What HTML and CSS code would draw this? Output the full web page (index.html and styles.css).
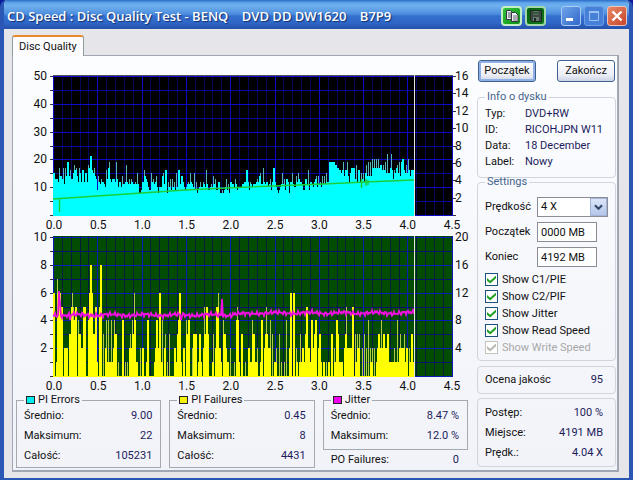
FILE: index.html
```html
<!DOCTYPE html>
<html lang="pl">
<head>
<meta charset="utf-8">
<title>CD Speed : Disc Quality Test</title>
<link rel="stylesheet" href="styles.css">
</head>
<body>
<div class="window">
  <header class="titlebar">
    <h1 class="title">CD Speed : Disc Quality Test - BENQ &nbsp;&nbsp; DVD DD DW1620 &nbsp;&nbsp; B7P9</h1>
    <div class="tools">
      <button class="tool" aria-label="Copy"><svg viewBox="0 0 16 16" width="16" height="16"><path d="M2.500 2.500h4l2 2v7h-6z" fill="#e8ecea" stroke="#334"/><path d="M4 5h3M4 7h3M4 9h3" stroke="#556"/><path d="M7.500 4.500h4l2.500 2.500v6.500h-6.500z" fill="#f2f2f2" stroke="#334"/><path d="M9 8h4M9 10h4M9 12h4" stroke="#667"/></svg></button>
      <button class="tool dark" aria-label="Save"><svg viewBox="0 0 16 16" width="16" height="16"><path d="M2.500 2.500h11v11h-10l-1-1z" fill="#3a4a40" stroke="#1c2a22"/><path d="M5 3h6v4h-6z" fill="#56715c"/><path d="M5 9h6v4h-6z" fill="#6a7a70"/><path d="M7 10v3" stroke="#1c2a22" stroke-width="2"/><path d="M5 5h6" stroke="#1c3a22"/></svg></button>
    </div>
    <div class="controls">
      <button class="ctl" aria-label="Minimize"><svg viewBox="0 0 18 18" width="18" height="18"><path d="M4 11h7v3h-7z" fill="#fff"/></svg></button>
      <button class="ctl dim" aria-label="Maximize"><svg viewBox="0 0 18 18" width="18" height="18"><path d="M4 5h10" stroke="#9cc2f2" stroke-width="2"/><path d="M4.500 5v8.500h9v-8.500" fill="none" stroke="#9cc2f2"/></svg></button>
      <button class="ctl close" aria-label="Close"><svg viewBox="0 0 18 18" width="18" height="18"><path d="M4.500 4.500l9 9M13.500 4.500l-9 9" stroke="#fff" stroke-width="2.400"/></svg></button>
    </div>
  </header>

  <main class="client">
    <div class="tabs" role="tablist"><button class="tab" role="tab" aria-selected="true">Disc Quality</button></div>
    <div class="panel">
      <div class="charts">
        <section class="chart">
          <div class="scale left"><span>50</span><span>40</span><span>30</span><span>20</span><span>10</span><span></span></div>
          <svg class="plot" id="errors" viewBox="0 0 400 141" preserveAspectRatio="none" role="img" aria-label="PI Errors"></svg>
          <div class="scale right"><span>16</span><span>14</span><span>12</span><span>10</span><span>8</span><span>6</span><span>4</span><span>2</span><span></span></div>
          <div class="axis"><span>0.0</span><span>0.5</span><span>1.0</span><span>1.5</span><span>2.0</span><span>2.5</span><span>3.0</span><span>3.5</span><span>4.0</span><span>4.5</span></div>
        </section>
        <section class="chart">
          <div class="scale left"><span>10</span><span>8</span><span>6</span><span>4</span><span>2</span><span></span></div>
          <svg class="plot" id="failures" viewBox="0 0 400 141" preserveAspectRatio="none" role="img" aria-label="PI Failures"></svg>
          <div class="scale right"><span>20</span><span>16</span><span>12</span><span>8</span><span>4</span><span></span></div>
          <div class="axis"><span>0.0</span><span>0.5</span><span>1.0</span><span>1.5</span><span>2.0</span><span>2.5</span><span>3.0</span><span>3.5</span><span>4.0</span><span>4.5</span></div>
        </section>
        <div class="stats">
          <fieldset class="stat">
            <legend><i class="swatch cyan"></i>PI Errors</legend>
            <dl><div><dt>Średnio:</dt><dd>9.00</dd></div><div><dt>Maksimum:</dt><dd>22</dd></div><div><dt>Całość:</dt><dd>105231</dd></div></dl>
          </fieldset>
          <fieldset class="stat">
            <legend><i class="swatch yellow"></i>PI Failures</legend>
            <dl><div><dt>Średnio:</dt><dd>0.45</dd></div><div><dt>Maksimum:</dt><dd>8</dd></div><div><dt>Całość:</dt><dd>4431</dd></div></dl>
          </fieldset>
          <div class="column">
            <fieldset class="stat short">
              <legend><i class="swatch magenta"></i>Jitter</legend>
              <dl><div><dt>Średnio:</dt><dd>8.47 %</dd></div><div><dt>Maksimum:</dt><dd>12.0 %</dd></div></dl>
            </fieldset>
            <dl class="po"><div><dt>PO Failures:</dt><dd>0</dd></div></dl>
          </div>
        </div>
      </div>

      <aside class="side">
        <div class="actions"><button class="btn default">Początek</button><button class="btn">Zakończ</button></div>
        <fieldset class="group info">
          <legend>Info o dysku</legend>
          <dl><dt>Typ:</dt><dd>DVD+RW</dd><dt>ID:</dt><dd>RICOHJPN W11</dd><dt>Data:</dt><dd>18 December</dd><dt>Label:</dt><dd>Nowy</dd></dl>
        </fieldset>
        <fieldset class="group settings">
          <legend>Settings</legend>
          <div class="fields">
            <label for="speed">Prędkość</label>
            <span class="combo"><select id="speed"><option>4 X</option></select><svg class="arrow" viewBox="0 0 17 18" width="17" height="18"><path d="M4.500 7l4 4 4-4" fill="none" stroke="#34496b" stroke-width="2.400"/></svg></span>
            <label for="from">Początek</label><input id="from" type="text" value="0000 MB">
            <label for="to">Koniec</label><input id="to" type="text" value="4192 MB">
          </div>
          <label class="check"><input type="checkbox" checked>Show C1/PIE</label>
          <label class="check"><input type="checkbox" checked>Show C2/PIF</label>
          <label class="check"><input type="checkbox" checked>Show Jitter</label>
          <label class="check"><input type="checkbox" checked>Show Read Speed</label>
          <label class="check off"><input type="checkbox" checked disabled>Show Write Speed</label>
        </fieldset>
        <dl class="group score"><div><dt>Ocena jakośc</dt><dd>95</dd></div></dl>
        <dl class="group progress"><div><dt>Postęp:</dt><dd>100 %</dd></div><div><dt>Miejsce:</dt><dd>4191 MB</dd></div><div><dt>Prędk.:</dt><dd>4.04 X</dd></div></dl>
      </aside>
    </div>
  </main>
</div>
<script src="charts.js"></script>
</body>
</html>
```
FILE: styles.css
```css
* { box-sizing: border-box; }
body {
  margin: 0;
  background: #0a1a9a;
  font: 11px/14px Roboto, "Liberation Sans", sans-serif;
  color: #111;
}
button, input, select { font: inherit; color: inherit; margin: 0; }
fieldset, dl, dd, h1 { margin: 0; padding: 0; }
fieldset { min-width: 0; }

.window {
  min-height: 100vh;
  display: flex;
  flex-direction: column;
  border: solid #2a56b4;
  border-width: 0 4px 4px;
  border-radius: 7px 7px 0 0;
  background: #e6e5ea;
  overflow: hidden;
}

/* Title bar */
.titlebar {
  display: flex;
  align-items: center;
  height: 29px;
  margin: 0 -4px;
  padding: 2px 6px 0 7px;
  background: linear-gradient(#2c6cc8 0, #62a8ec 3px, #6fb0ee 6px, #4c8ede 14px, #346fd0 16px, #2f66c6 23px, #2450ac 29px);
}
.title {
  flex: 1;
  color: #fff;
  font: 600 13px/18px "Open Sans", "Noto Sans", sans-serif;
  text-shadow: 1px 1px 1px #12306e;
  white-space: nowrap;
}
.tools { display: flex; gap: 3px; margin-right: 15px; }
.tool {
  width: 21px; height: 20px; padding: 0;
  display: grid; place-items: center;
  border: 2px solid #c4efc4;
  border-radius: 4px;
  background: linear-gradient(135deg, #35c43a, #0d8c18);
}
.tool.dark { background: linear-gradient(135deg, #07600f, #0a7a18); border-color: #a4d8ac; }
.controls { display: flex; gap: 3px; }
.ctl {
  width: 20px; height: 20px; padding: 0;
  border: 1px solid #a9cbf4;
  border-radius: 3px;
  background: linear-gradient(135deg, #6fa4ea, #3167c8);
}
.ctl svg { display: block; }
.ctl.dim { border-color: #6c9ee6; background: #4680d8; }
.ctl.close { border-color: #f0c4b8; background: linear-gradient(135deg, #e88a6a, #c8442a); }

/* Tabs and page */
.client { flex: 1; display: flex; flex-direction: column; padding: 6px 10px 6px 8px; }
.tabs { display: flex; margin-bottom: -1px; }
.tab {
  position: relative;
  height: 21px;
  padding: 0 6px;
  border: 1px solid #919b9c;
  border-top: 2px solid #e68b2c;
  border-bottom: 0;
  border-radius: 3px 3px 0 0;
  background: #fcfcfe;
}
.panel {
  flex: 1;
  display: flex;
  border: 1px solid #a0a6b4;
  border-right-width: 2px;
  border-bottom-width: 2px;
  background: linear-gradient(#fcfdff, #f2f3f9);
}

/* Charts */
.charts { flex: 1; min-width: 0; padding-top: 19px; }
.chart {
  display: grid;
  grid-template-columns: 40px 1fr 24px;
  margin-bottom: 4px;
  font-size: 12px;
}
.plot { width: 100%; height: 141px; display: block; overflow: visible; }
.scale {
  display: flex; flex-direction: column; justify-content: space-between;
  margin: -6px 0 -6px;
}
.scale span { height: 14px; }
.scale.left { text-align: right; padding-right: 6px; }
.scale.right { padding-left: 2px; }
.axis { grid-column: 2; display: flex; justify-content: space-between; margin: 2px -10px 0; }
.axis span { width: 22px; text-align: center; }

/* Statistics */
.stats {
  display: grid;
  grid-template-columns: repeat(3, minmax(0, 1fr));
  gap: 8px;
  align-items: start;
  padding: 0 9px 0 3px;
  margin-top: -2px;
}
.stat { border: 1px solid #a4a8b2; padding: 1px 8px 1px 7px; }
.stat.short { padding-bottom: 3px; }
.stat legend { display: flex; align-items: center; gap: 3px; line-height: 10px; padding: 0 2px; }
.swatch { width: 9px; height: 8px; border: 1px solid #222; }
.cyan { background: #00eeee; }
.yellow { background: #f4f400; }
.magenta { background: #f000f0; }
dl > div { display: flex; justify-content: space-between; line-height: 20px; }
dd { color: #1c1c5c; }
.po { padding: 0 9px 0 8px; }

/* Side panel */
.side { width: 140px; padding: 4px 1px 0 0; }
.actions { display: flex; justify-content: space-between; margin: 0 1px 11px; }
.btn {
  width: 58px; height: 22px; padding: 0;
  border: 1px solid #3f618e;
  border-radius: 3px;
  background: linear-gradient(#fff, #eceef6 70%, #ccd3e6);
}
.btn.default { box-shadow: inset 0 0 0 2px #8fb0e6; }
.group { border: 1px solid #cfd4de; border-radius: 4px; padding: 0 12px 0 7px; }
.group legend { line-height: 8px; padding: 0 2px; color: #46648c; }
.info dl { display: grid; grid-template-columns: 40px 1fr; line-height: 16px; padding: 5px 0 7px; white-space: nowrap; }
.settings { padding: 0 8px 4px 7px; }
.fields { display: grid; grid-template-columns: 52px 1fr; row-gap: 5px; align-items: center; padding: 11px 0 4px; }
.fields input, .fields select {
  height: 20px; padding: 0 3px;
  border: 1px solid #8c8c98; border-radius: 0;
  background: #fff;
}
.fields input { width: 60px; }
.combo { position: relative; display: flex; width: 71px; }
.combo select { appearance: none; width: 100%; }
.arrow {
  position: absolute; right: 1px; top: 1px;
  background: linear-gradient(#dce6f8, #b4c6ea);
  border: 1px solid #a4b6d8;
  pointer-events: none;
}
.check { display: flex; align-items: center; gap: 4px; height: 17px; white-space: nowrap; }
.check input {
  appearance: none;
  width: 13px; height: 13px;
  border: 1px solid #1c5180;
  background: #fff;
  display: grid; place-items: center;
}
.check input:checked::before {
  content: "";
  width: 9px; height: 8px;
  background: #21a121;
  clip-path: polygon(0 30%, 35% 65%, 100% 0, 100% 35%, 35% 100%, 0 65%);
}
.check.off { color: #a8a8a8; }
.check.off input { border-color: #c4c4bc; }
.check.off input:checked::before { background: #b8b8b0; }
.score { margin-top: 5px; padding-top: 3px; padding-bottom: 3px; }
.progress { margin-top: 4px; padding-top: 4px; padding-bottom: 3px; }
```
FILE: charts.js
```js
// Samples are base-36 digits, one per column of the recorded range.
const PIE =
  "ffdddcheedhbhejjegddfighechfcggcffcihllgfhed" +
  "9ecbdccbagdhjdcddcjdaccaebbcicbdbdcbbcbfb889" +
  "ccgedca99fcdbcea8aaaefbgg8cad9dac9faggbeeca9" +
  "abcbfcbaf9c89acaacbagb99abaebd99cc88989ad9b8c" +
  "cbadb9aaaabbccggc9cbab" +
  "bbcdcefbbhcbccabd9chhca989abfbd9ddc8ccfbaaecfdccb99ddbg9ccbacdeaebcaebebfcc" +
  "jjjjjjiihhggfgjeggjecfhhhdicggcfdfcfiejejekhkhkhkhiigigjfmffhmgdgfhifjejkkgfifkgeggg";
const PIF =
  "6601766655022220335645455043322555004688633551058803024141141224330100044010102324364110020220014400001012442661402301" +
  "0300002213466102204344002033330133102535530001302556221043321102000010454103300100221143311200144023532240301112003010010400266066021013122135522144223" +
  "4402331011010110330214431111023522222552031323002030204021202012332423322331111102114123222312202133" + "1";

const COLS = 361;   // recorded part of the 400 unit wide plot
const BASE = 140;   // y of the zero line
const GB = 88.6;    // units per gigabyte

const values = s => [...s].map(c => parseInt(c, 36));
const path = (d, attrs) => `<path d="${d}" ${attrs}/>`;

function grid(major, minor, back, frame) {
  let faint = "", strong = "", rowsMinor = "", rows = "";
  for (let i = 0; i <= 45; i++) {
    const x = Math.round(i * GB / 10) + 0.5;
    if (i % 5) faint += `M${x} 0V${BASE}`; else strong += `M${x} 0V${BASE}`;
  }
  for (let i = 0; i <= 10; i++) {
    const y = Math.round(i * 13.9) + 1.5;
    if (i % 2) rowsMinor += `M0 ${y}H400`; else rows += `M0 ${y}H400`;
  }
  return `<rect width="400" height="141" fill="${back}"/>` +
    path(faint, `stroke="${minor}"`) + path(rowsMinor, `stroke="${frame}"`) +
    path(strong + rows, `stroke="${major}"`);
}

function bars(data, unit, bright, soft) {
  let low = "", high = "";
  const step = COLS / data.length;
  data.forEach((v, i) => {
    const x0 = Math.round(i * step), x1 = Math.round((i + 1) * step);
    const side = Math.max(data[i - 1] || 0, data[i + 1] || 0);
    const body = Math.min(v, side);
    low += `M${x0} ${BASE + 1}V${Math.round(BASE - body * unit)}H${x1}V${BASE + 1}z`;
    if (v > body) high += `M${x0} ${Math.round(BASE - body * unit)}V${Math.round(BASE - v * unit)}H${x1}V${Math.round(BASE - body * unit)}z`;
  });
  return path(low, `fill="${bright}" shape-rendering="crispEdges"`) +
    path(high, `fill="${soft}" shape-rendering="crispEdges"`);
}

function ticks(n, left) {
  let d = "";
  for (let i = 0; i <= n; i++) {
    const y = Math.round(i * 139 / n) + 1.5;
    d += left ? `M-3 ${y}H0` : `M400 ${y}h3`;
  }
  return path(d, 'stroke="#334"');
}

const cursor = path("M361.500 0V141", 'stroke="#e4e4e4" stroke-width="1"');
const frame = path("M0 .5H400", 'stroke="#555"');

const speed = [[0, 124], [44, 121], [89, 118], [132, 115], [172, 113], [197, 112], [247, 110], [292, 108], [312, 107], [361, 105]];
const speedLine = "M" + speed.map(p => p.join(" ")).join("L") + "M6.500 124V137M308.500 104V113M313 104V111M315 105V110";

document.getElementById("errors").innerHTML =
  grid("#0a0ac8", "#06065a", "#000", "#0606a0") +
  bars(values(PIE), 2.79, "#00ffff", "#58b4b4") +
  path(speedLine, 'fill="none" stroke="#18d038" stroke-width="1.500"') +
  frame + cursor + ticks(10, true) + ticks(8, false);

let jitter = "";
for (let x = 0; x <= COLS; x++) {
  const drift = x < 180 ? 79 : x < 200 ? 78 : 77;
  let y = drift + Math.sin(x * 0.19) * 0.8 + Math.sin(x * 2.3) * 1.3 + Math.sin(x * 1.37 + 2) * 1.1;
  if (x === 6) y = 55;
  if (x === 7) y = 66;
  if (x === 17 || x === 128) y = 84;
  if (x === 169) y = 63;
  jitter += (x ? "L" : "M") + x + " " + y.toFixed(1);
}
document.getElementById("failures").innerHTML =
  grid("#0a1cb4", "#061e3c", "#024c04", "#06126e") +
  bars(values(PIF), 13.9, "#ffff00", "#b4c848") +
  path(jitter, 'fill="none" stroke="#f010e0" stroke-width="1.800"') +
  cursor + ticks(10, true);
```
